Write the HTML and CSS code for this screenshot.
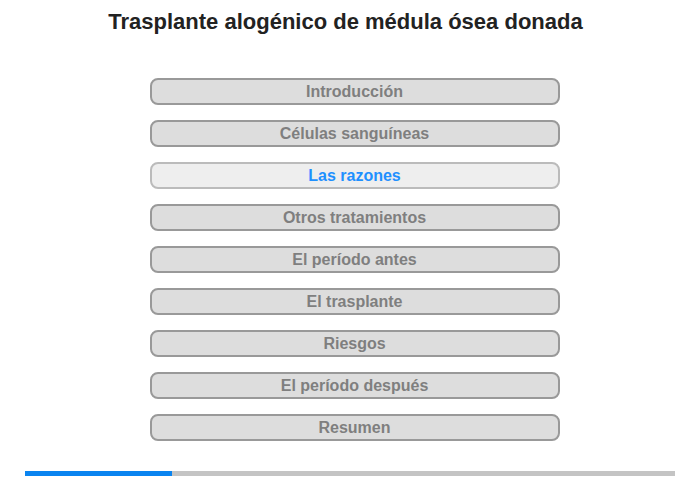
FILE: index.html
```html
<!DOCTYPE html>
<html lang="es">
<head>
    <meta charset="UTF-8">
    <title>Trasplante alogénico de médula ósea donada</title>
    <link rel="stylesheet" href="styles.css">
</head>
<body>
    <div class="page">
        <h1 class="title">Trasplante alogénico de médula ósea donada</h1>
        <div class="menu">
            <div class="item">Introducción</div>
            <div class="item">Células sanguíneas</div>
            <div class="item active">Las razones</div>
            <div class="item">Otros tratamientos</div>
            <div class="item">El período antes</div>
            <div class="item">El trasplante</div>
            <div class="item">Riesgos</div>
            <div class="item">El período después</div>
            <div class="item">Resumen</div>
        </div>
        <div class="progress">
            <div class="progress-fill"></div>
        </div>
    </div>
</body>
</html>
```

FILE: styles.css
```css
body {
    margin: 0;
    padding: 0;
    font-family: 'Liberation Sans', Arial, sans-serif;
    background-color: #fff;
}

.page {
    width: 700px;
    height: 480px;
    display: flex;
    flex-direction: column;
    align-items: center;
}

.title {
    margin: 9px 0 0 -9px;
    font-size: 22px;
    line-height: 26px;
    font-weight: bold;
    color: #222;
}

.menu {
    margin: 43px 0 0 9px;
    display: flex;
    flex-direction: column;
    gap: 15px;
}

.item {
    width: 406px;
    height: 23px;
    line-height: 23px;
    border: 2px solid #999;
    border-radius: 8px;
    background-color: #ddd;
    color: #7f7f7f;
    font-size: 16px;
    font-weight: bold;
    text-align: center;
}

.item.active {
    border-color: #bbb;
    background-color: #eee;
    color: #1e90ff;
}

.progress {
    margin-top: 30px;
    width: 650px;
    height: 5px;
    background-color: #c4c4c4;
}

.progress-fill {
    width: 22.6%;
    height: 100%;
    background-color: #0a84f0;
}
```
